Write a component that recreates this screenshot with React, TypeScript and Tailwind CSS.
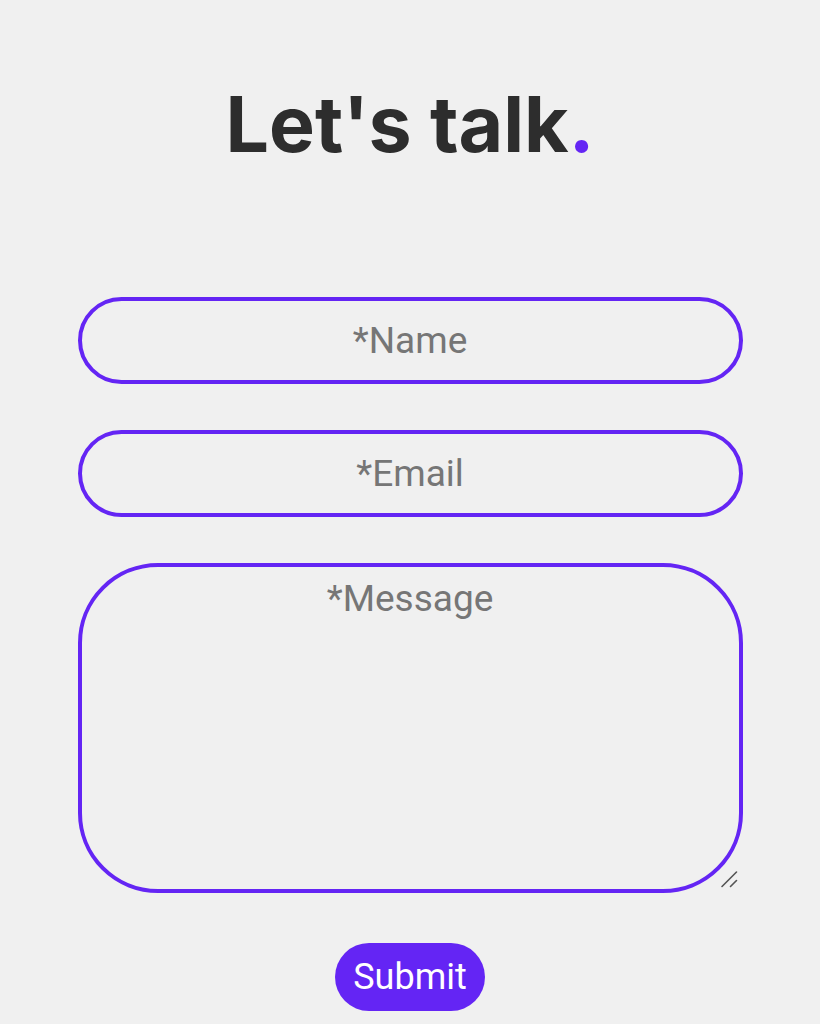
import React from 'react'

const field =
  'w-full rounded-full border-4 border-[#6425f4] bg-transparent text-center text-[37px] text-[#2d2d2d] placeholder:text-[#767676] outline-none'

export default function App() {
  return (
    <div className="min-h-[1024px] bg-[#f0f0f0] flex flex-col items-center pt-[74px] font-['Roboto',sans-serif]">
      <h1 className="text-[77px] leading-[100px] font-bold text-[#2d2d2d] font-['Inter',sans-serif]">
        Let's talk<span className="text-[#6425f4]">.</span>
      </h1>

      <form className="mt-[123px] w-[665px] flex flex-col items-center" onSubmit={(e) => e.preventDefault()}>
        <input type="text" placeholder="*Name" className={`h-[87px] ${field}`} />
        <input type="email" placeholder="*Email" className={`mt-[46px] h-[87px] ${field}`} />

        <div className="relative mt-[46px] w-full">
          <textarea
            placeholder="*Message"
            className={`block h-[330px] !rounded-[80px] resize-none leading-[42px] pt-[11px] ${field}`}
          />
          {/* resize grip */}
          <svg className="absolute right-[5px] bottom-[5px] pointer-events-none" width="18" height="18" viewBox="0 0 18 18">
            <path d="M2 16.5 L16.5 2 M10.5 16.5 L16.5 10.5" stroke="#555" strokeWidth="1.6" strokeLinecap="round" />
          </svg>
        </div>

        <button
          type="submit"
          className="mt-[50px] h-[68px] px-[18px] rounded-full bg-[#6425f4] text-white text-[36px] leading-none"
        >
          Submit
        </button>
      </form>
    </div>
  )
}
